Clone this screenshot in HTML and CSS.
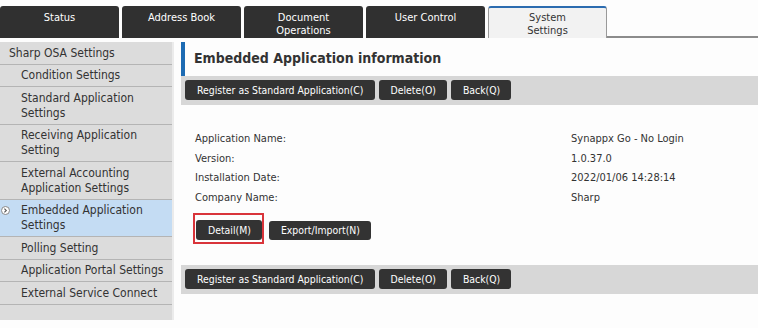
FILE: index.html
```html
<!DOCTYPE html>
<html lang="en">
<head>
  <meta charset="utf-8">
  <title>System Settings - Embedded Application information</title>
  <link rel="stylesheet" href="styles.css">
</head>
<body>
  <div id="tabs">
    <div class="tab">Status</div>
    <div class="tab">Address Book</div>
    <div class="tab">Document<br>Operations</div>
    <div class="tab">User Control</div>
    <div class="tab active">System<br>Settings</div>
    <div class="tab-rest"></div>
  </div>

  <div id="page">
    <ul id="menu">
      <li class="top">Sharp OSA Settings</li>
      <li>Condition Settings</li>
      <li>Standard Application Settings</li>
      <li>Receiving Application Setting</li>
      <li>External Accounting Application Settings</li>
      <li class="current">
        <span class="mark">
          <svg width="9" height="9" viewBox="0 0 9 9"><circle cx="4.5" cy="4.5" r="4" fill="#fff" stroke="#888"/><path d="M3.4 2.6 L5.3 4.5 L3.4 6.4" fill="none" stroke="#555" stroke-width="1.1"/></svg>
        </span>
        Embedded Application Settings
      </li>
      <li>Polling Setting</li>
      <li>Application Portal Settings</li>
      <li>External Service Connect</li>
    </ul>

    <div id="main">
      <h1 class="heading">Embedded Application information</h1>

      <div class="toolbar">
        <button class="btn">Register as Standard Application(C)</button>
        <button class="btn">Delete(O)</button>
        <button class="btn">Back(Q)</button>
      </div>

      <div class="info">
        <div class="row"><span class="label">Application Name:</span><span class="value">Synappx Go - No Login</span></div>
        <div class="row"><span class="label">Version:</span><span class="value">1.0.37.0</span></div>
        <div class="row"><span class="label">Installation Date:</span><span class="value">2022/01/06 14:28:14</span></div>
        <div class="row"><span class="label">Company Name:</span><span class="value">Sharp</span></div>
      </div>

      <div class="actions">
        <span class="hilite"><button class="btn">Detail(M)</button></span>
        <button class="btn export">Export/Import(N)</button>
      </div>

      <div class="toolbar">
        <button class="btn">Register as Standard Application(C)</button>
        <button class="btn">Delete(O)</button>
        <button class="btn">Back(Q)</button>
      </div>
    </div>
  </div>
</body>
</html>
```

FILE: styles.css
```css
body {
  margin: 0;
  background: #fdfdfd;
  color: #333;
  font-family: "DejaVu Sans Condensed", "DejaVu Sans", sans-serif;
  font-size: 11px;
}

/* top tabs */
#tabs {
  display: flex;
  gap: 3px;
  padding-top: 6px;
  height: 32px;
}
.tab {
  width: 119px;
  box-sizing: border-box;
  background: #303030;
  color: #fff;
  text-align: center;
  font-size: 11px;
  line-height: 13px;
  padding-top: 5px;
  border-radius: 3px 3px 0 0;
}
.tab.active {
  background: #f2f2f2;
  color: #333;
  border: 1px solid #999;
  border-top: 2px solid #2c6cb0;
  border-bottom: none;
  padding-top: 3px;
}
.tab-rest {
  flex: 1;
  border-bottom: 2px solid #8c8c8c;
  margin-left: -3px;
}

/* left menu */
#page {
  display: flex;
  gap: 7px;
  padding-top: 4px;
}
#menu {
  list-style: none;
  margin: 0;
  padding: 0 0 15px;
  width: 174px;
  flex: none;
  background: #dcdcdc;
  border-right: 2px solid #ebebeb;
  box-sizing: border-box;
  align-self: flex-start;
  font-size: 12px;
}
#menu li {
  position: relative;
  padding: 3.5px 4px 3px 21px;
  line-height: 15px;
  border-bottom: 1px solid #b4b4b4;
}
#menu li.top {
  padding-left: 9px;
}
#menu li.current {
  background: #c4dcf3;
}
#menu .mark {
  position: absolute;
  left: 1px;
  top: 6px;
  line-height: 0;
}

/* main */
#main {
  flex: 1;
}
.heading {
  margin: 0;
  border-left: 4px solid #1d6bb3;
  padding: 8px 0 0 9px;
  height: 26px;
  font-size: 14px;
  font-weight: bold;
  color: #333;
}
.toolbar {
  display: flex;
  gap: 4px;
  background: #d7d7d7;
  padding: 4px 4px 5px;
}
.btn {
  font: inherit;
  font-size: 10.4px;
  background: #333;
  color: #fff;
  border: none;
  border-radius: 3px;
  height: 20px;
  padding: 0 11px 0 12px;
}
.info {
  padding: 24px 0 0 14px;
}
.row {
  display: flex;
  height: 19.7px;
  line-height: 19.7px;
}
.label {
  width: 376px;
}
.actions {
  display: flex;
  align-items: flex-start;
  gap: 5px;
  padding: 5px 0 21px 12px;
}
.hilite {
  display: flex;
  border: 2px solid #d9343a;
  padding: 5px 0 2px 1px;
}
.actions .export {
  margin-top: 8px;
  height: 19px;
}
```
